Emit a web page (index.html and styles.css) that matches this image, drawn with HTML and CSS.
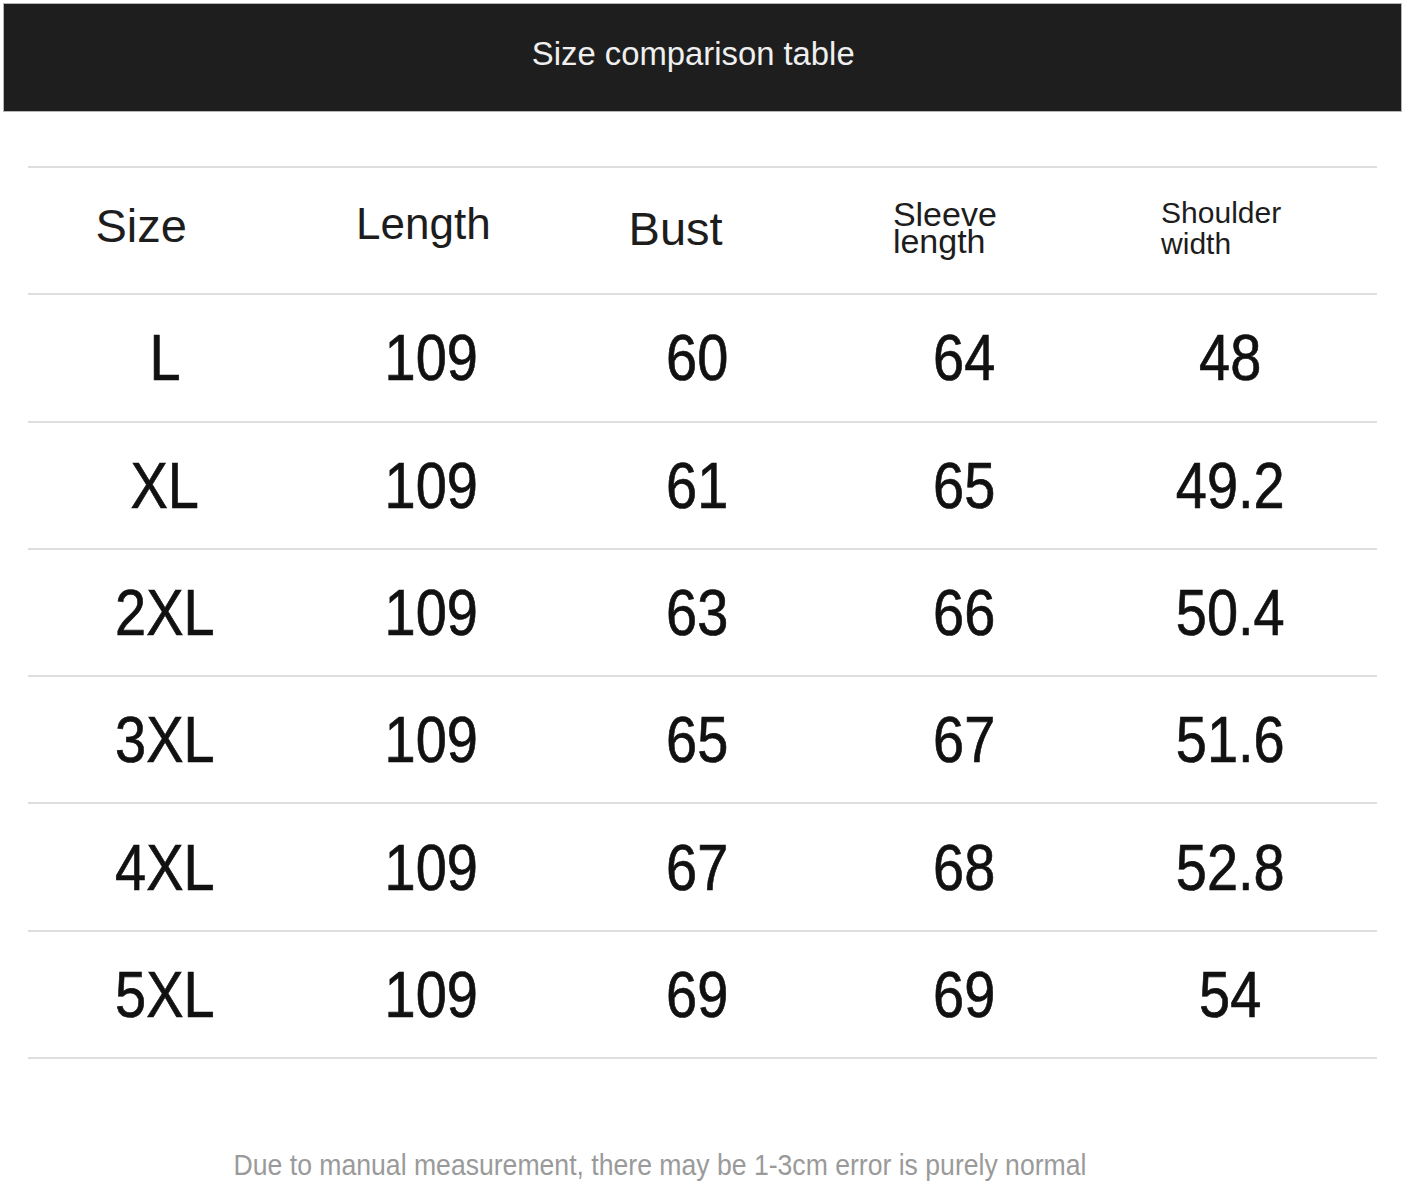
FILE: index.html
```html
<!DOCTYPE html>
<html>
<head>
<meta charset="utf-8">
<link rel="stylesheet" href="styles.css">
</head>
<body>
<div class="page">
  <div class="banner"><span class="banner-title">Size comparison table</span></div>
  <div class="table">
    <div class="row head">
      <div class="cell h-size"><span class="htext big">Size</span></div>
      <div class="cell h-length"><span class="htext big2">Length</span></div>
      <div class="cell h-bust"><span class="htext big3">Bust</span></div>
      <div class="cell h-sleeve"><span class="htext two sleeve">Sleeve<br>length</span></div>
      <div class="cell h-shoulder"><span class="htext two shoulder">Shoulder<br>width</span></div>
    </div>
    <div class="row"><div class="cell"><span class="num">L</span></div><div class="cell"><span class="num">109</span></div><div class="cell"><span class="num">60</span></div><div class="cell"><span class="num">64</span></div><div class="cell"><span class="num">48</span></div></div>
    <div class="row"><div class="cell"><span class="num">XL</span></div><div class="cell"><span class="num">109</span></div><div class="cell"><span class="num">61</span></div><div class="cell"><span class="num">65</span></div><div class="cell"><span class="num">49.2</span></div></div>
    <div class="row"><div class="cell"><span class="num">2XL</span></div><div class="cell"><span class="num">109</span></div><div class="cell"><span class="num">63</span></div><div class="cell"><span class="num">66</span></div><div class="cell"><span class="num">50.4</span></div></div>
    <div class="row"><div class="cell"><span class="num">3XL</span></div><div class="cell"><span class="num">109</span></div><div class="cell"><span class="num">65</span></div><div class="cell"><span class="num">67</span></div><div class="cell"><span class="num">51.6</span></div></div>
    <div class="row"><div class="cell"><span class="num">4XL</span></div><div class="cell"><span class="num">109</span></div><div class="cell"><span class="num">67</span></div><div class="cell"><span class="num">68</span></div><div class="cell"><span class="num">52.8</span></div></div>
    <div class="row last"><div class="cell"><span class="num">5XL</span></div><div class="cell"><span class="num">109</span></div><div class="cell"><span class="num">69</span></div><div class="cell"><span class="num">69</span></div><div class="cell"><span class="num">54</span></div></div>
  </div>
  <div class="note"><span class="note-text">Due to manual measurement, there may be 1-3cm error is purely normal</span></div>
</div>
</body>
</html>
```
FILE: styles.css
```css
html, body {
  margin: 0;
  padding: 0;
  background: #ffffff;
}
body {
  font-family: "Liberation Sans", Arial, sans-serif;
}
.page {
  width: 1405px;
  height: 1183px;
  padding: 3px 3px 0 3px;
  box-sizing: border-box;
  overflow: hidden;
}
.banner {
  height: 109px;
  box-sizing: border-box;
  background: #1e1e1e;
  border: 1px solid #b5b5b5;
  display: flex;
  align-items: center;
  justify-content: center;
  padding-bottom: 8px;
  padding-right: 18px;
}
.banner-title {
  display: inline-block;
  color: #efefef;
  font-size: 34px;
  transform: scaleX(0.965);
}
.table {
  margin: 54px 25px 0 25px;
}
.row {
  display: grid;
  grid-template-columns: repeat(5, 266.25px);
  padding-left: 4px;
  height: 127.3px;
  box-sizing: border-box;
  border-top: 2px solid #dedede;
  align-items: center;
}
.row.last {
  height: 129.3px;
  border-bottom: 2px solid #dedede;
}
.cell {
  display: flex;
  justify-content: center;
  align-items: center;
  line-height: 1;
}
.num {
  display: inline-block;
  font-size: 65px;
  color: #111111;
  -webkit-text-stroke: 0.7px #111111;
  transform: scaleX(0.86);
  line-height: 1;
}
.htext {
  display: inline-block;
  color: #1d1d1d;
}
.big { font-size: 47px; }
.big2 { font-size: 44px; }
.big3 { font-size: 47px; }
.h-size { padding-right: 48px; padding-bottom: 10px; }
.h-length { padding-right: 16px; padding-bottom: 14px; }
.h-bust { padding-right: 44px; padding-bottom: 4px; }
.h-sleeve { padding-right: 38px; padding-bottom: 6px; }
.h-shoulder { padding-right: 18px; padding-bottom: 6px; }
.two { text-align: left; }
.sleeve {
  font-size: 34px;
  line-height: 27px;
}
.shoulder {
  font-size: 30px;
  line-height: 31px;
}
.note {
  margin-top: 90px;
  display: flex;
  justify-content: center;
  padding-right: 86px;
}
.note-text {
  display: inline-block;
  white-space: nowrap;
  color: #9a9a9a;
  font-size: 29px;
  transform: scaleX(0.917);
}
```
